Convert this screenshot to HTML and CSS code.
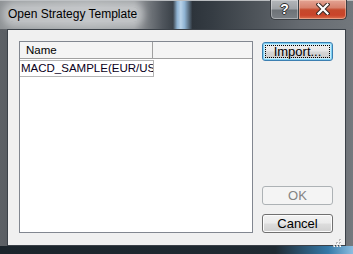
FILE: index.html
```html
<!DOCTYPE html>
<html>
<head>
<meta charset="utf-8">
<link rel="stylesheet" href="styles.css">
</head>
<body>
<div class="window">
  <div class="titlebar">
    <span class="title">Open Strategy Template</span>
    <div class="caption">
      <div class="cap-btn help"><span class="q">?</span></div>
      <div class="cap-btn close">
        <svg width="14" height="12" viewBox="0 0 14 12">
          <path d="M2.5 1.5 L11.5 10.5 M11.5 1.5 L2.5 10.5" stroke="#3a2a26" stroke-width="4.2" stroke-linecap="square"/>
          <path d="M2.5 1.5 L11.5 10.5 M11.5 1.5 L2.5 10.5" stroke="#ffffff" stroke-width="2.2" stroke-linecap="square"/>
        </svg>
      </div>
    </div>
  </div>
  <div class="client">
    <div class="listbox">
      <div class="header">
        <div class="col col-name">Name</div>
        <div class="col col-rest"></div>
      </div>
      <div class="row">
        <div class="cell">MACD_SAMPLE(EUR/USD)</div>
      </div>
    </div>
    <div class="buttons">
      <button class="btn default">Import...</button>
      <div class="spacer"></div>
      <button class="btn disabled">OK</button>
      <button class="btn">Cancel</button>
    </div>
    <div class="grip">
      <svg width="9" height="9" viewBox="0 0 9 9">
        <g fill="#b8b8b8">
          <rect x="6" y="0" width="2" height="2"/>
          <rect x="3" y="3" width="2" height="2"/><rect x="6" y="3" width="2" height="2"/>
          <rect x="0" y="6" width="2" height="2"/><rect x="3" y="6" width="2" height="2"/><rect x="6" y="6" width="2" height="2"/>
        </g>
        <g fill="#ffffff">
          <rect x="7" y="1" width="1" height="1"/>
          <rect x="4" y="4" width="1" height="1"/><rect x="7" y="4" width="1" height="1"/>
          <rect x="1" y="7" width="1" height="1"/><rect x="4" y="7" width="1" height="1"/><rect x="7" y="7" width="1" height="1"/>
        </g>
      </svg>
    </div>
  </div>
</div>
</body>
</html>
```

FILE: styles.css
```css
html, body {
  margin: 0;
  padding: 0;
  background: #1d252c;
}

.window {
  width: 353px;
  height: 254px;
  overflow: hidden;
  display: flex;
  flex-direction: column;
  background:
    linear-gradient(to right, #1b242b 0, #202a32 78%, #3579a8 93%, #8cbde0 100%) 0 246px / 100% 8px no-repeat,
    linear-gradient(to right, #5d6166 0, #5a5e63 8px, transparent 8px, transparent 345px, #6f7378 345px, #75797e 100%) 0 29px / 100% 217px no-repeat,
    linear-gradient(to right, #8f9396 0, #9a9da0 10%, #a4a7aa 25%, #9b9ea1 38%, #50565d 46%, #3b4249 49%, #8fb3d2 50.2%, #b8d2e8 51.2%, #8fb3d2 52.3%, #2d343b 54.5%, #353c43 60%, #4d5359 72%, #656a70 85%, #72777c 100%);
  font-family: "Liberation Sans", Arial, sans-serif;
}

.titlebar {
  height: 29px;
  display: flex;
  align-items: flex-start;
  flex: none;
  border-top: 1px solid #b9bcbf;
  box-sizing: border-box;
}

.title {
  margin-left: 8px;
  margin-top: 6px;
  font-size: 12px;
  line-height: 15px;
  color: #000;
  background: rgba(222, 224, 226, 0.55);
  box-shadow: 0 0 7px 5px rgba(222, 224, 226, 0.55);
  border-radius: 6px;
  padding: 0 2px 0 0;
}

.caption {
  margin-left: auto;
  margin-right: 6px;
  display: flex;
  margin-top: -1px;
}

.cap-btn {
  height: 20px;
  box-sizing: border-box;
  border: 1px solid #3a3e43;
  border-top: none;
  display: flex;
  align-items: center;
  justify-content: center;
}

.help {
  width: 28px;
  border-radius: 0 0 0 5px;
  border-right: none;
  background: linear-gradient(to bottom, #b4b7ba 0, #9ea2a6 45%, #6e7378 55%, #7b8085 100%);
  box-shadow: inset 0 0 0 1px rgba(255, 255, 255, 0.35);
}

.q {
  color: #fff;
  font-weight: bold;
  font-size: 14px;
  line-height: 14px;
  margin-top: -1px;
  text-shadow: 0 0 1px #222, 1px 0 0 #333, -1px 0 0 #333, 0 1px 0 #333, 0 -1px 0 #333;
}

.close {
  width: 49px;
  border-radius: 0 0 5px 0;
  background: linear-gradient(to bottom, #e3a494 0, #d7826d 40%, #c5492c 52%, #c9442a 80%, #d9704f 100%);
  box-shadow: inset 0 0 0 1px rgba(255, 220, 200, 0.45);
}

.close svg {
  margin-top: -1px;
}

.client {
  position: relative;
  margin: 0 7px;
  height: 217px;
  box-sizing: border-box;
  border: 1px solid #3b4148;
  background: #f0f0f0;
  padding: 11px 0 0 11px;
  display: flex;
  align-items: flex-start;
}

.listbox {
  width: 234px;
  height: 192px;
  box-sizing: border-box;
  border: 1px solid #828790;
  background: #fff;
  font-size: 11.5px;
}

.header {
  display: flex;
  height: 16px;
  border-bottom: 1px solid #a0a0a0;
  background: #f4f4f4;
}

.col {
  line-height: 16px;
}

.col-name {
  width: 133px;
  padding-left: 6px;
  box-sizing: border-box;
  border-right: 1px solid #a0a0a0;
}

.col-rest {
  flex: 1;
}

.row {
  display: flex;
  height: 18px;
}

.cell {
  width: 134px;
  box-sizing: border-box;
  margin-top: 1px;
  height: 17px;
  border: 1px solid #b5b5b5;
  border-left: none;
  padding-left: 1px;
  line-height: 15px;
  white-space: nowrap;
  overflow: hidden;
  color: #0a0020;
}

.buttons {
  margin-left: 9px;
  width: 71px;
  height: 192px;
  display: flex;
  flex-direction: column;
  padding-top: 1px;
  box-sizing: border-box;
}

.spacer {
  flex: 1;
}

.btn {
  height: 19px;
  width: 71px;
  flex: none;
  box-sizing: border-box;
  border: 1px solid #707070;
  border-radius: 3px;
  background: linear-gradient(to bottom, #f2f2f2 0, #ebebeb 48%, #dddddd 52%, #cfcfcf 100%);
  box-shadow: inset 0 0 0 1px #fcfcfc;
  font-family: "Liberation Sans", Arial, sans-serif;
  font-size: 13px;
  line-height: 15px;
  color: #000;
  padding: 0;
}

.btn + .btn {
  margin-top: 9px;
}

.btn.default {
  border-color: #3c7fb1;
  box-shadow: inset 0 0 0 1px #7fd0f2, inset 0 0 0 2px #c8ecfb;
  background: linear-gradient(to bottom, #f0f0f0 0, #e6e6e6 48%, #d6d6d6 52%, #cacaca 100%);
  outline: 1px dotted #000;
  outline-offset: -4px;
}

.btn.disabled {
  border-color: #adb2b5;
  background: #f4f4f4;
  box-shadow: none;
  color: #838383;
}

.grip {
  position: absolute;
  right: 3px;
  bottom: 2px;
  width: 9px;
  height: 9px;
}
```
